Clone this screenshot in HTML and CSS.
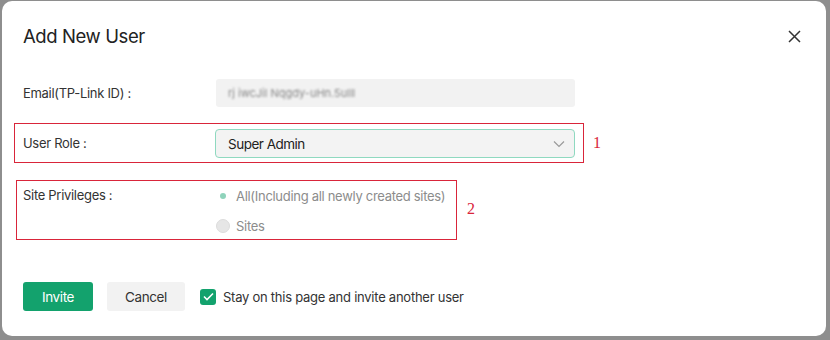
FILE: index.html
```html
<!DOCTYPE html>
<html>
<head>
<meta charset="utf-8">
<link rel="stylesheet" href="styles.css">
</head>
<body>
<div class="dialog">
  <div class="header">
    <h1 class="title">Add New User</h1>
    <svg class="close" width="13" height="13" viewBox="0 0 13 13"><path d="M1 1L12 12M12 1L1 12" stroke="#333" stroke-width="1.5" fill="none"/></svg>
  </div>
  <div class="form">
    <div class="row row-email">
      <div class="label">Email(TP-Link ID) :</div>
      <div class="input"><span class="blur">rj iwcJil Nqgdy-uHn.5ulll</span></div>
    </div>
    <div class="annot-wrap">
      <div class="row row-role boxed box1">
        <div class="label">User Role :</div>
        <div class="select"><span>Super Admin</span>
          <svg class="chev" width="12" height="8" viewBox="0 0 12 8"><path d="M1 1.5L6 6.5L11 1.5" stroke="#9a9a9a" stroke-width="1.2" fill="none"/></svg>
        </div>
      </div>
      <span class="num num1">1</span>
    </div>
    <div class="annot-wrap">
      <div class="row row-site boxed box2">
        <div class="label">Site Privileges :</div>
        <div class="radios">
          <div class="radio"><span class="dot on"></span>All(Including all newly created sites)</div>
          <div class="radio"><span class="dot off"></span>Sites</div>
        </div>
      </div>
      <span class="num num2">2</span>
    </div>
  </div>
  <div class="footer">
    <button class="btn primary">Invite</button>
    <button class="btn secondary">Cancel</button>
    <label class="check"><span class="box"><svg width="11" height="9" viewBox="0 0 11 9"><path d="M1 4.5L4 7.5L10 1.5" stroke="#fff" stroke-width="1.6" fill="none"/></svg></span>Stay on this page and invite another user</label>
  </div>
</div>
</body>
</html>
```
FILE: styles.css
```css
* { box-sizing: border-box; }
html, body { margin: 0; padding: 0; }
body {
  width: 830px;
  height: 340px;
  background: #8e8e8e;
  font-family: Inter, "Noto Sans", sans-serif;
  color: #333;
  padding: 1px 4px 4px 2px;
}
.dialog {
  background: #fff;
  width: 824px;
  height: 335px;
  border-radius: 10px;
  padding: 0 21px 0 21px;
}
.header {
  height: 70px;
  display: flex;
  align-items: center;
  justify-content: space-between;
  padding-top: 0;
}
.title {
  margin: 0;
  font-size: 18.5px;
  font-weight: 400;
  color: #222;
  letter-spacing: -0.4px;
}
.close { margin-right: 4px; }
.form { display: flex; flex-direction: column; }
.row { display: flex; align-items: center; }
.label { width: 193px; font-size: 13px; letter-spacing: -0.3px; color: #333; }
.row-email { height: 30px; margin-top: 7px; }
.input {
  width: 359px; height: 28px; background: #f2f2f2; border-radius: 3px;
  display: flex; align-items: center; padding-left: 12px;
}
.blur { font-size: 11px; color: #888; filter: blur(1.2px); }
.annot-wrap { display: flex; align-items: center; position: relative; }
.boxed { border: 1.5px solid #d9253a; }
.box1 {
  margin-left: -9px; padding-left: 8px; width: 570px; height: 40px; margin-top: 15px;
}
.select {
  width: 360px; height: 29px; background: #f3f3f3; border: 1px solid #8fd9c0;
  border-radius: 4px; display: flex; align-items: center; justify-content: space-between;
  padding: 0 9px 0 12px; font-size: 13.5px; letter-spacing: -0.5px; color: #222; margin-left: -1px; margin-top: 1px;
}
.num {
  font-family: "Liberation Serif", serif; color: #d9253a; font-size: 16px;
}
.num1 { margin-left: 9px; margin-top: 14px; }
.box2 {
  margin-left: -7px; padding-left: 6px; width: 441px; height: 60px; margin-top: 17px;
  align-items: flex-start; padding-top: 5px;
}
.num2 { margin-left: 10px; margin-top: 14px; }
.row-site .label { padding-top: 1px; }
.radios { display: flex; flex-direction: column; gap: 11px; margin-left: 0; }
.radio { display: flex; align-items: center; font-size: 13px; letter-spacing: -0.3px; color: #8c8c8c; height: 19px; }
.dot {
  width: 14px; height: 14px; border-radius: 50%; margin-right: 6px; display: inline-block; position: relative;
}
.dot.on { background: #fff; }
.dot.on::after {
  content: ""; position: absolute; left: 4px; top: 4px; width: 6px; height: 6px;
  border-radius: 50%; background: #8fd3bb;
}
.dot.off { background: #e6e6e6; border: 1px solid #dcdcdc; }
.footer { display: flex; align-items: center; margin-top: 42px; }
.btn {
  border: none; height: 29px; font-family: inherit; font-size: 13.5px; letter-spacing: -0.4px; border-radius: 3px;
}
.primary { background: #13a26d; color: #fff; width: 70px; }
.secondary { background: #f2f2f2; color: #333; width: 78px; margin-left: 14px; }
.check { display: flex; align-items: center; font-size: 13px; letter-spacing: -0.25px; color: #333; margin-left: 15px; }
.check .box {
  width: 16px; height: 16px; background: #13a26d; border-radius: 3px; margin-right: 7px;
  display: flex; align-items: center; justify-content: center;
}
```
